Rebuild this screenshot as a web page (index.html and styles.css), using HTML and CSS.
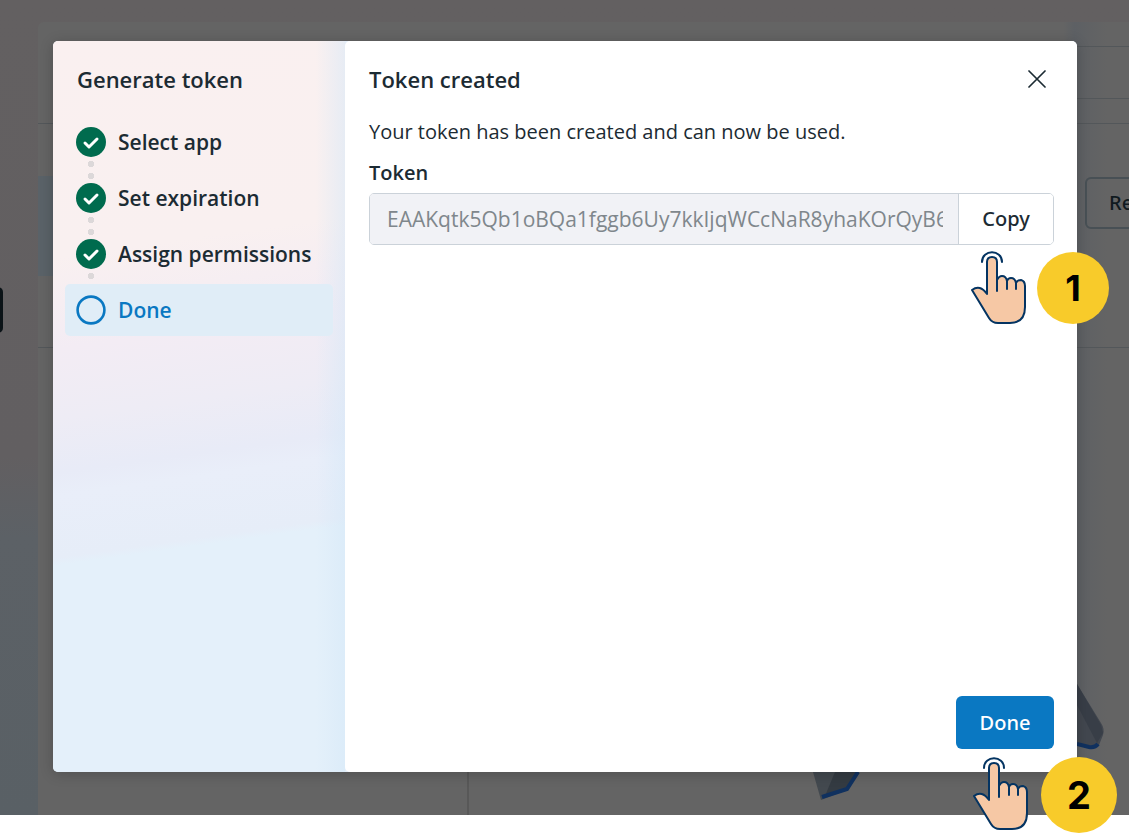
FILE: index.html
```html
<!DOCTYPE html>
<html lang="en">
<head>
    <meta charset="UTF-8">
    <meta name="viewport" content="width=device-width, initial-scale=1.0">
    <title>Generate token</title>
    <link rel="stylesheet" href="styles.css">
</head>
<body>
    <div class="screen">
        <!-- dimmed page behind the dialog -->
        <div class="backdrop" aria-hidden="true">
            <div class="rail"></div>
            <div class="page">
                <div class="page-bar"><div class="page-search"></div></div>
                <div class="page-row">
                    <div class="page-item"></div>
                    <button type="button" class="page-button" tabindex="-1">Re</button>
                </div>
                <div class="page-body">
                    <div class="page-list"></div>
                </div>
            </div>
            <div class="side-tab"></div>
            <svg class="art art-left" width="60" height="40" viewBox="0 0 60 40">
                <path d="M6 0 L52 0 L40 18 L14 28 Z" fill="#43494f"/>
                <path d="M28 0 L52 0 L40 18 L18 24 Z" fill="#343b42"/>
                <path d="M15 25 L40 17 L51 0" fill="none" stroke="#10315f" stroke-width="4"/>
            </svg>
            <svg class="art art-right" width="30" height="72" viewBox="0 0 30 72">
                <path d="M0 3 L24 42 Q28 48 26 54 L22 64 Q17 69 10 66 L0 64 Z" fill="#42474f"/>
                <path d="M0 24 L20 62 L26 52 L24 44 L0 3 Z" fill="#383e47"/>
                <path d="M0 63 L12 66 Q18 67 21 63" fill="none" stroke="#10315f" stroke-width="4"/>
            </svg>
        </div>

        <div class="dialog" role="dialog" aria-labelledby="dialog-title">
            <aside class="steps-panel">
                <h2>Generate token</h2>
                <ol class="steps">
                    <li class="step">
                        <svg class="step-icon" viewBox="0 0 30 30"><circle cx="15" cy="15" r="15" fill="#006b4e"/><path d="M9 16 L13 20 L21 12" fill="none" stroke="#fff" stroke-width="3" stroke-linecap="round" stroke-linejoin="round"/></svg>
                        <span>Select app</span>
                    </li>
                    <li class="step">
                        <svg class="step-icon" viewBox="0 0 30 30"><circle cx="15" cy="15" r="15" fill="#006b4e"/><path d="M9 16 L13 20 L21 12" fill="none" stroke="#fff" stroke-width="3" stroke-linecap="round" stroke-linejoin="round"/></svg>
                        <span>Set expiration</span>
                    </li>
                    <li class="step">
                        <svg class="step-icon" viewBox="0 0 30 30"><circle cx="15" cy="15" r="15" fill="#006b4e"/><path d="M9 16 L13 20 L21 12" fill="none" stroke="#fff" stroke-width="3" stroke-linecap="round" stroke-linejoin="round"/></svg>
                        <span>Assign permissions</span>
                    </li>
                    <li class="step current" aria-current="step">
                        <svg class="step-icon" viewBox="0 0 30 30"><circle cx="15" cy="15" r="13.4" fill="none" stroke="#0a78c2" stroke-width="2.6"/></svg>
                        <span>Done</span>
                    </li>
                </ol>
            </aside>

            <section class="content">
                <div class="content-header">
                    <h2 id="dialog-title">Token created</h2>
                    <button type="button" class="close" aria-label="Close">
                        <svg width="18" height="18" viewBox="0 0 18 18"><path d="M1 1 L17 17 M17 1 L1 17" stroke="#1c2b33" stroke-width="1.7" stroke-linecap="round"/></svg>
                    </button>
                </div>
                <p class="message">Your token has been created and can now be used.</p>
                <label for="token">Token</label>
                <div class="token-field">
                    <input type="text" id="token" value="EAAKqtk5Qb1oBQa1fggb6Uy7kkIjqWCcNaR8yhaKOrQyB6" readonly>
                    <button type="button" class="copy">Copy</button>
                </div>
                <div class="content-footer">
                    <button type="button" class="done">Done</button>
                </div>
            </section>
        </div>

        <div class="hint hint-copy">
            <svg class="hand" viewBox="0 0 56 74"><use href="#hand-shape"/></svg>
            <span class="badge">1</span>
        </div>
        <div class="hint hint-done">
            <svg class="hand" viewBox="0 0 56 74">
                <g id="hand-shape" stroke="#043462" stroke-width="2" stroke-linecap="round" stroke-linejoin="round">
                    <path d="M16 43 V11 Q16 6 21 6 Q26 6 26 11 V29 Q28 25 31 25 Q35 25 36 30 Q37 27 40 27 Q44 27 45 32 Q46 29 50 29 Q54 30 54 35 V56 Q54 72 39 72 H27 Q21 72 18 67 L1 39 Q9 33 16 43 Z" fill="#f6c8a5"/>
                    <path d="M26 29 V40 M36 30 V38 M45 32 V38" fill="none"/>
                    <path d="M11 11 C11 -2 31 -2 31 11" fill="none"/>
                </g>
            </svg>
            <span class="badge badge-large">2</span>
        </div>
    </div>
</body>
</html>
```
FILE: styles.css
```css
* {
    box-sizing: border-box;
}

body {
    margin: 0;
    font-family: "Open Sans", "Noto Sans", sans-serif;
    font-size: 20px;
    line-height: 24px;
    color: #1c2b33;
    background-color: #fff;
}

h2,
p {
    margin: 0;
}

h2 {
    font-size: 22px;
    line-height: 32px;
    font-weight: 600;
}

button,
input {
    font: inherit;
    color: inherit;
}

button {
    font-family: "Noto Sans", "Open Sans", sans-serif;
    font-weight: 500;
    cursor: pointer;
}

.screen {
    position: relative;
    display: flex;
    height: 100vh;
    padding: 41px 52px 63px 53px;
    overflow: hidden;
}

/* page behind the dialog */
.backdrop {
    position: absolute;
    inset: 0 0 20px;
    display: flex;
    padding-top: 22px;
    overflow: hidden;
    background: linear-gradient(#636061, #625f61 56%, #5c6166 66%, #596065);
}

.rail {
    flex: 0 0 38px;
}

.page {
    flex: 1;
    display: flex;
    flex-direction: column;
    border-radius: 6px 0 0;
    background: linear-gradient(90deg, #646464 94%, #5d6064 95%, #646464 98%);
}

.page-bar {
    height: 102px;
    padding-top: 24px;
    border-bottom: 1px solid #53575a;
}

.page-search {
    height: 53px;
    margin-left: 40%;
    border-top: 1px solid #53575a;
    border-bottom: 1px solid #53575a;
}

.page-row {
    display: flex;
    justify-content: space-between;
    height: 224px;
    border-bottom: 1px solid #53575a;
}

.page-item {
    width: 300px;
    height: 100px;
    margin-top: 52px;
    background-color: #5a6268;
}

.page-button {
    width: 100px;
    height: 52px;
    margin: 53px -56px 0 0;
    padding: 0 0 0 22px;
    text-align: left;
    color: #101a1f;
    background: none;
    border: 2px solid #485055;
    border-radius: 6px;
}

.page-body {
    flex: 1;
    display: flex;
}

.page-list {
    width: 431px;
    border-right: 2px solid #585858;
}

.side-tab {
    position: absolute;
    left: -8px;
    top: 287px;
    width: 11px;
    height: 46px;
    border-radius: 5px;
    background-color: #0b1317;
}

.art {
    position: absolute;
}

.art-left {
    left: 807px;
    bottom: 3px;
}

.art-right {
    right: 22px;
    bottom: 62px;
}

/* dialog */
.dialog {
    position: relative;
    flex: 1;
    display: flex;
    border-radius: 5px;
    background-color: #e4eef9;
    box-shadow: 0 2px 14px rgba(0, 0, 0, 0.2);
    overflow: hidden;
}

.steps-panel {
    flex: 0 0 292px;
    padding: 22px 12px;
    background:
        linear-gradient(90deg, transparent 90%, rgba(212, 232, 248, 0.5)),
        linear-gradient(172deg, #faf0f0 0%, #f9f0f0 28%, #f3ecf4 40%, #eeecf5 49%, #e8ebf7 56%, #e9eef9 59%, #e6edf8 67%, #e4f0fa 68%, #e4f0fa 100%);
}

.steps-panel h2 {
    padding-left: 12px;
}

.steps {
    display: flex;
    flex-direction: column;
    gap: 4px;
    margin: 21px 0 0;
    padding: 0;
    list-style: none;
}

.step {
    position: relative;
    display: flex;
    align-items: center;
    gap: 12px;
    height: 52px;
    padding: 0 11px;
    font-size: 21px;
    font-weight: 600;
    border-radius: 5px;
}

.step-icon {
    flex: none;
    width: 30px;
    height: 30px;
}

/* dots between the steps */
.step:not(.current)::after {
    content: "";
    position: absolute;
    left: 23px;
    top: 45px;
    width: 6px;
    height: 18px;
    background: radial-gradient(circle at 3px 3px, #dcd8d9 3px, transparent 3px) 0 0 / 6px 12px;
}

.step:nth-child(3)::after {
    height: 6px;
}

.step.current {
    color: #0a78c2;
    background-color: #e0edf7;
}

.content {
    flex: 1;
    min-width: 0;
    display: flex;
    flex-direction: column;
    padding: 22px 23px 23px 24px;
    border-radius: 5px;
    background-color: #fff;
}

.content-header {
    display: flex;
    justify-content: space-between;
    align-items: center;
}

.close {
    display: flex;
    padding: 7px 8px;
    border: none;
    background: none;
}

.message {
    margin-top: 25px;
}

.content label {
    margin-top: 17px;
    font-weight: 600;
}

.token-field {
    display: flex;
    height: 52px;
    margin-top: 8px;
    border: 1px solid #cbd2d9;
    border-radius: 5px;
    overflow: hidden;
}

.token-field input {
    flex: 1;
    min-width: 0;
    padding: 0;
    font-size: 21px;
    line-height: 32px;
    color: #7f878c;
    border: solid #f1f2f6;
    border-width: 0 15px 0 17px;
    border-radius: 0;
    background-color: #f1f2f6;
    outline: none;
}

.copy {
    width: 95px;
    padding: 0;
    border: none;
    border-left: 1px solid #cbd2d9;
    background-color: #fff;
}

.content-footer {
    display: flex;
    justify-content: flex-end;
    margin-top: auto;
}

.done {
    width: 98px;
    height: 53px;
    padding: 0;
    color: #fff;
    border: none;
    border-radius: 6px;
    background-color: #0a78c2;
}

/* numbered pointers over the dialog */
.hint {
    position: absolute;
    display: flex;
    align-items: center;
    gap: 10px;
}

.hint-copy {
    top: 251px;
    right: 20px;
}

.hint-done {
    right: 12px;
    bottom: 2px;
    align-items: flex-start;
    gap: 12px;
}

.hand {
    width: 56px;
    height: 74px;
    overflow: visible;
}

.badge {
    display: flex;
    align-items: center;
    justify-content: center;
    width: 72px;
    height: 72px;
    font-family: Inter, sans-serif;
    font-size: 36px;
    font-weight: 700;
    color: #000;
    border-radius: 50%;
    background-color: #f8cb2a;
}

.badge-large {
    width: 76px;
    height: 76px;
    font-size: 38px;
}
```
